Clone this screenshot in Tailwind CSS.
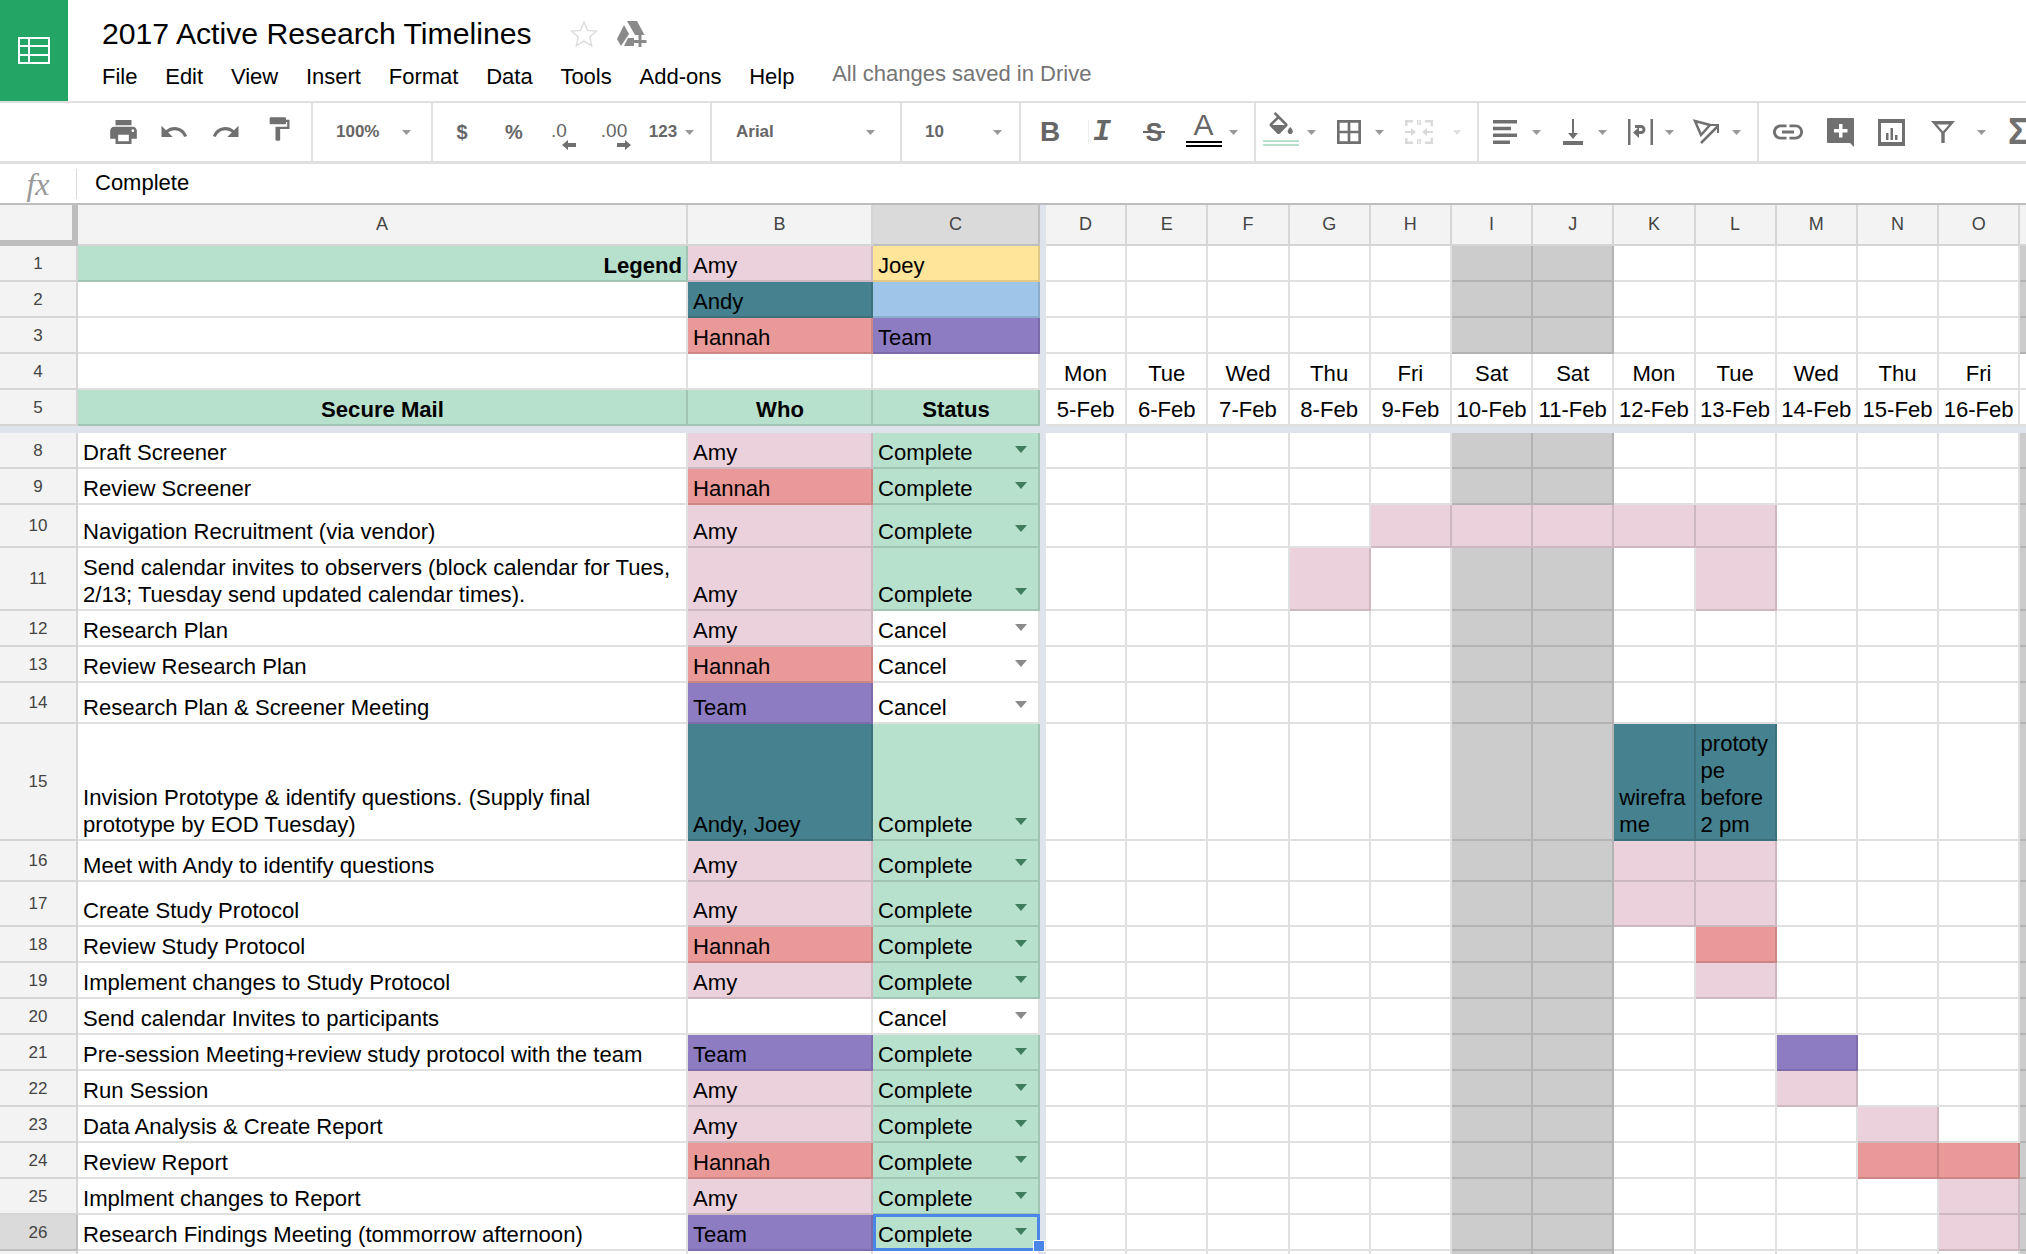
<!DOCTYPE html>
<html lang="en">
<head>
    <meta charset="UTF-8">
    <title>2017 Active Research Timelines - Google Sheets</title>
    <script src="https://cdn.jsdelivr.net/npm/@tailwindcss/browser@4"></script>
</head>
<body class="w-[2026px] h-[1254px] overflow-hidden bg-white text-black [font-family:'Liberation_Sans',Arial,sans-serif]">
    <!-- Title bar -->
    <header class="flex h-[103px] border-b-2 border-[#e0e0e0]">
        <div class="w-[68px] h-full bg-[#23a566] flex items-center justify-center">
            <svg class="w-[32px] h-[27px]" viewBox="0 0 32 27" fill="none" stroke="#ffffff" stroke-width="2"><rect x="1" y="1" width="30" height="25"/><path d="M1 9h30M1 18h30M11 1v25"/></svg>
        </div>
        <div class="pl-[34px] pt-[15px]">
            <div class="flex items-center h-[38px]">
                <h1 class="text-[30.2px] leading-[38px]">2017 Active Research Timelines</h1>
                <svg class="w-[30px] h-[30px] ml-[37px]" viewBox="0 0 24 24" fill="none" stroke="#dcdcdc" stroke-width="1.1"><path d="M12 2.5l2.8 6.6 7.2.6-5.4 4.7 1.6 7-6.2-3.7-6.2 3.7 1.6-7L2 9.7l7.2-.6z"/></svg>
                <svg class="w-[30px] h-[26px] ml-[18px]" viewBox="0 0 30 26" fill="#8a8a8a"><path d="M10 0h10l7.500 14H18z"/><path d="M7 4l5 9-8 12-4-7z"/><path d="M7 25l4-8h6v8z"/><path d="M21.500 14h3v5h5v3h-5v4h-3v-4h-5v-3h5z"/></svg>
            </div>
            <nav class="flex items-center gap-[27.75px] text-[22px] leading-[28px] mt-[10px]">
                <span>File</span><span>Edit</span><span>View</span><span>Insert</span><span>Format</span><span>Data</span><span>Tools</span><span>Add-ons</span><span>Help</span>
                <span class="text-[#757575] ml-[10px] -mt-[6px]">All changes saved in Drive</span>
            </nav>
        </div>
    </header>

    <!-- Toolbar -->
    <div class="flex h-[61px] overflow-hidden border-b-[3px] border-[#e0e0e0] text-[#666666]">
        <div class="w-[313px] shrink-0 pl-[98px] flex items-center border-r-2 border-[#e0e0e0]">
            <div class="w-[50px] flex justify-center"><svg class="w-[27px] h-[24px]" viewBox="2 3 20 18" fill="#707070"><path d="M19 8H5c-1.66 0-3 1.34-3 3v6h4v4h12v-4h4v-6c0-1.66-1.34-3-3-3zm-3 11H8v-5h8v5zm3-7c-.55 0-1-.45-1-1s.45-1 1-1 1 .45 1 1-.45 1-1 1zm-1-9H6v4h12V3z"/></svg></div>
            <div class="w-[52px] flex justify-center"><svg class="w-[30px] h-[30px]" viewBox="0 0 24 24" fill="#707070"><path d="M12.5 8c-2.65 0-5.05.99-6.9 2.6L2 7v9h9l-3.62-3.62c1.39-1.16 3.16-1.88 5.12-1.88 3.54 0 6.55 2.31 7.6 5.5l2.37-.78C21.08 11.03 17.15 8 12.5 8z"/></svg></div>
            <div class="w-[52px] flex justify-center"><svg class="w-[30px] h-[30px]" viewBox="0 0 24 24" fill="#707070"><path d="M18.4 10.6C16.55 8.99 14.15 8 11.5 8c-4.65 0-8.58 3.03-9.96 7.22L3.9 16c1.05-3.19 4.05-5.5 7.6-5.5 1.95 0 3.73.72 5.12 1.88L13 16h9V7l-3.6 3.6z"/></svg></div>
            <div class="w-[54px] flex justify-center"><svg class="w-[28px] h-[28px] -mt-[6px]" viewBox="0 0 24 24" fill="#707070"><path d="M18 4V3c0-.55-.45-1-1-1H5c-.55 0-1 .45-1 1v4c0 .55.45 1 1 1h12c.55 0 1-.45 1-1V6h1v4H9v11c0 .55.45 1 1 1h2c.55 0 1-.45 1-1v-9h8V4h-3z"/></svg></div>
        </div>
        <div class="w-[120px] shrink-0 pl-[23px] flex items-center border-r-2 border-[#e0e0e0] text-[17px] font-bold">
            <span>100%</span>
            <svg class="w-[9px] h-[5px] ml-[23px]" viewBox="0 0 9 5"><path d="M0 0h9L4.500 5z" fill="#999999"/></svg>
        </div>
        <div class="w-[279px] shrink-0 flex items-center border-r-2 border-[#e0e0e0] font-bold text-[20px]">
            <div class="w-[58px] text-center">$</div>
            <div class="w-[46px] text-center">%</div>
            <div class="w-[44px] mt-[6px] flex flex-col items-center leading-none text-[19px] font-normal">
                <span>.0</span>
                <svg class="w-[14px] h-[10px] ml-[20px]" viewBox="0 0 14 10" fill="#707070"><path d="M0 5l6-5v3h8v4H6v3z"/></svg>
            </div>
            <div class="w-[66px] mt-[6px] flex flex-col items-center leading-none text-[19px] font-normal">
                <span>.00</span>
                <svg class="w-[14px] h-[10px] ml-[20px]" viewBox="0 0 14 10" fill="#707070"><path d="M14 5L8 0v3H0v4h8v3z"/></svg>
            </div>
            <div class="w-[32px] text-center text-[17px]">123</div>
            <svg class="w-[9px] h-[5px] ml-[6px]" viewBox="0 0 9 5"><path d="M0 0h9L4.500 5z" fill="#999999"/></svg>
        </div>
        <div class="w-[190px] shrink-0 pl-[24px] pr-[25px] flex items-center justify-between border-r-2 border-[#e0e0e0] text-[17px] font-bold">
            <span>Arial</span>
            <svg class="w-[9px] h-[5px]" viewBox="0 0 9 5"><path d="M0 0h9L4.500 5z" fill="#999999"/></svg>
        </div>
        <div class="w-[119px] shrink-0 pl-[23px] pr-[17px] flex items-center justify-between border-r-2 border-[#e0e0e0] text-[17px] font-bold">
            <span>10</span>
            <svg class="w-[9px] h-[5px]" viewBox="0 0 9 5"><path d="M0 0h9L4.500 5z" fill="#999999"/></svg>
        </div>
        <div class="w-[235px] shrink-0 flex items-center border-r-2 border-[#e0e0e0]">
            <div class="w-[58px] text-center text-[28px] font-bold leading-none">B</div>
            <div class="w-[1px] h-[24px] ml-[9px] -mr-[1px] bg-[#eeeeee]"></div>
            <div class="w-[28px] text-center text-[30px] font-bold italic leading-none [font-family:'Liberation_Mono',monospace]">I</div>
            <div class="w-[58px] ml-[9px] flex justify-center">
                <span class="relative text-[25px] font-bold leading-none px-[3px]">S<span class="absolute left-0 right-0 top-[11px] h-[2px] bg-[#666666]"></span></span>
            </div>
            <div class="w-[41px] flex flex-col items-center">
                <span class="text-[30px] leading-[28px] -mt-[6px]">A</span>
                <div class="w-[36px] h-[6px] mt-[2px] border-y-2 border-black"></div>
            </div>
            <svg class="w-[9px] h-[5px] ml-[5px]" viewBox="0 0 9 5"><path d="M0 0h9L4.500 5z" fill="#999999"/></svg>
        </div>
        <div class="w-[223px] shrink-0 flex items-center border-r-2 border-[#e0e0e0]">
            <div class="w-[50px] flex flex-col items-center">
                <svg class="w-[25px] h-[22px] -mt-[6px]" viewBox="3 0 18.500 17" fill="#707070"><path fill-rule="evenodd" d="M16.560 8.940L7.620 0 6.210 1.410l2.380 2.380-5.150 5.150c-.59.59-.59 1.540 0 2.120l5.500 5.500c.29.29.68.44 1.060.44s.77-.15 1.060-.44l5.500-5.500c.59-.58.59-1.530 0-2.120zM5.210 10L10 5.210 14.790 10H5.210zM19 11.500s-2 2.170-2 3.500c0 1.100.9 2 2 2s2-.9 2-2c0-1.330-2-3.500-2-3.500z"/></svg>
                <div class="w-[36px] h-[6px] mt-[6px] border-y-2 border-[#b7e1cd]"></div>
            </div>
            <div class="w-[10px] flex justify-center"><svg class="w-[9px] h-[5px]" viewBox="0 0 9 5"><path d="M0 0h9L4.500 5z" fill="#999999"/></svg></div>
            <div class="w-[48px] ml-[9px] flex justify-center"><svg class="w-[24px] h-[24px]" viewBox="3 3 18 18" fill="#707070"><path d="M3 3v18h18V3H3zm8 16H5v-6h6v6zm0-8H5V5h6v6zm8 8h-6v-6h6v6zm0-8h-6V5h6v6z"/></svg></div>
            <div class="w-[12px] flex justify-center"><svg class="w-[9px] h-[5px]" viewBox="0 0 9 5"><path d="M0 0h9L4.500 5z" fill="#999999"/></svg></div>
            <div class="w-[68px] flex justify-center"><svg class="w-[28px] h-[24px]" viewBox="0 0 28 24" fill="#d9d9d9"><path d="M0 0h8v2.500H2.500V6H0zM20 0h8v6h-2.500V2.500H20zM0 18h2.500v3.500H8V24H0zM25.500 18H28v6h-8v-2.500h5.500zM12 0h1.500v5H12zM14.500 0H16v5h-1.500zM12 19h1.500v5H12zM14.500 19H16v5h-1.500zM0 11h6V8l5 4-5 4v-3H0zM28 11h-6V8l-5 4 5 4v-3h6z"/></svg></div>
            <div class="w-[8px] flex justify-center"><svg class="w-[9px] h-[5px]" viewBox="0 0 9 5"><path d="M0 0h9L4.500 5z" fill="#dddddd"/></svg></div>
        </div>
        <div class="w-[280px] shrink-0 flex items-center border-r-2 border-[#e0e0e0]">
            <div class="w-[52px] flex justify-center"><svg class="w-[24px] h-[24px]" viewBox="0 0 24 24" fill="#707070"><path d="M0 0h24v3.500H0zM0 6.700h18v3.500H0zM0 13.400h24v3.500H0zM0 20.500h17v3.500H0z"/></svg></div>
            <div class="w-[10px] flex justify-center"><svg class="w-[9px] h-[5px]" viewBox="0 0 9 5"><path d="M0 0h9L4.500 5z" fill="#999999"/></svg></div>
            <div class="w-[40px] ml-[12px] flex justify-center"><svg class="w-[22px] h-[26px]" viewBox="0 0 22 26" fill="#707070"><path d="M10 0h2v14h4l-5 6-5-6h4zM1 22h20v4H1z"/></svg></div>
            <div class="w-[10px] ml-[4px] flex justify-center"><svg class="w-[9px] h-[5px]" viewBox="0 0 9 5"><path d="M0 0h9L4.500 5z" fill="#999999"/></svg></div>
            <div class="w-[40px] ml-[13px] flex justify-center"><svg class="w-[25px] h-[26px]" viewBox="0 0 25 26" fill="#707070"><path d="M0 0h2.500v26H0zM22.500 0H25v26h-2.500z"/><path d="M7 6h6a4.500 4.500 0 010 9h-2v4l-6-5.500L11 8v4h2a1.500 1.500 0 000-3H7z"/></svg></div>
            <div class="w-[10px] ml-[4px] flex justify-center"><svg class="w-[9px] h-[5px]" viewBox="0 0 9 5"><path d="M0 0h9L4.500 5z" fill="#999999"/></svg></div>
            <div class="w-[40px] ml-[13px] flex justify-center"><svg class="w-[28px] h-[28px]" viewBox="0 0 28 28" fill="none" stroke="#707070" stroke-width="2.500"><path d="M2 3l15 4-9 10z"/><path d="M8 25L25 8"/><path d="M17 7h8v8" stroke-width="2"/></svg></div>
            <div class="w-[10px] ml-[4px] flex justify-center"><svg class="w-[9px] h-[5px]" viewBox="0 0 9 5"><path d="M0 0h9L4.500 5z" fill="#999999"/></svg></div>
        </div>
        <div class="shrink-0 flex items-center">
            <div class="w-[58px] flex justify-center"><svg class="w-[36px] h-[36px]" viewBox="0 0 24 24" fill="#707070"><path d="M3.900 12c0-1.710 1.390-3.100 3.100-3.100h4V7H7c-2.760 0-5 2.240-5 5s2.240 5 5 5h4v-1.900H7c-1.710 0-3.100-1.390-3.100-3.100zM8 13h8v-2H8v2zm9-6h-4v1.900h4c1.710 0 3.100 1.390 3.100 3.100s-1.390 3.100-3.100 3.100h-4V17h4c2.760 0 5-2.240 5-5s-2.240-5-5-5z"/></svg></div>
            <div class="w-[46px] flex justify-center"><svg class="w-[27px] h-[29px]" viewBox="0 0 27 29" fill="#707070"><path fill-rule="evenodd" d="M1 0h25a1 1 0 011 1v28l-4-4H1a1 1 0 01-1-1V1a1 1 0 011-1zm11 6v5H7v3.500h5v5h3.500v-5h5V11h-5V6z"/></svg></div>
            <div class="w-[57px] flex justify-center"><svg class="w-[27px] h-[27px]" viewBox="0 0 27 27" fill="#707070"><path fill-rule="evenodd" d="M0 0h27v27H0zm3 4v19h21V4z"/><path d="M8 14h2.500v7H8zM12.500 9H15v12h-2.500zM17 16h2.500v5H17z"/></svg></div>
            <div class="w-[46px] flex justify-center"><svg class="w-[24px] h-[22px]" viewBox="0 0 24 22" fill="#707070"><path fill-rule="evenodd" d="M0 0h24L13.700 12v10h-3.400V12zM6 3.500l6 7 6-7z"/></svg></div>
            <svg class="w-[9px] h-[5px] ml-[11px]" viewBox="0 0 9 5"><path d="M0 0h9L4.500 5z" fill="#999999"/></svg>
            <span class="ml-[22px] text-[36px] leading-none font-bold text-[#707070]">Σ</span>
        </div>
    </div>

    <!-- Formula bar -->
    <div class="flex items-center h-[41px] border-b-2 border-[#bdbdbd]">
        <div class="w-[77px] h-[30px] flex items-center justify-center border-r border-[#dddddd] text-[32px] italic text-[#999999] [font-family:'Liberation_Serif',serif]">fx</div>
        <div class="pl-[18px] -mt-[2px] text-[22px]">Complete</div>
    </div>

    <!-- Sheet -->
    <div id="sheet" class="text-[22.1px] leading-[27px]"></div>

    <script>
        const colTemplate = "grid grid-cols-[78px_610px_185px_167px_6px_repeat(13,81.2px)]";
        const lineCell = "border-r-2 border-b-2 border-black/12 overflow-hidden";
        const fills = {
            g: "bg-[#b7e1cd]", p: "bg-[#ead1dc]", t: "bg-[#45818e]", r: "bg-[#ea9999]",
            u: "bg-[#8e7cc3]", y: "bg-[#ffe599]", b: "bg-[#9fc5e8]", s: "bg-[#cccccc]"
        };
        const whoFill = { Amy: "p", Hannah: "r", Team: "u", "Andy, Joey": "t" };
        // P only shows as a sliver at the right edge, so it has no text
        const letters = "DEFGHIJKLMNOP".split("");
        const days = ["Mon", "Tue", "Wed", "Thu", "Fri", "Sat", "Sat", "Mon", "Tue", "Wed", "Thu", "Fri", ""];
        const dates = ["5-Feb", "6-Feb", "7-Feb", "8-Feb", "9-Feb", "10-Feb", "11-Feb", "12-Feb", "13-Feb", "14-Feb", "15-Feb", "16-Feb", ""];

        // row number, height class, task, who, status, coloured timeline cells
        const tasks = [
            [8, "h-[36px]", "Draft Screener", "Amy", "Complete", {}],
            [9, "h-[36px]", "Review Screener", "Hannah", "Complete", {}],
            [10, "h-[43px]", "Navigation Recruitment (via vendor)", "Amy", "Complete", { H: "p", I: "p", J: "p", K: "p", L: "p" }],
            [11, "h-[63px]", "Send calendar invites to observers (block calendar for Tues, 2/13; Tuesday send updated calendar times).", "Amy", "Complete", { G: "p", L: "p" }],
            [12, "h-[36px]", "Research Plan", "Amy", "Cancel", {}],
            [13, "h-[36px]", "Review Research Plan", "Hannah", "Cancel", {}],
            [14, "h-[41px]", "Research Plan & Screener Meeting", "Team", "Cancel", {}],
            [15, "h-[117px]", "Invision Prototype & identify questions. (Supply final prototype by EOD Tuesday)", "Andy, Joey", "Complete", { K: "t", L: "t" }],
            [16, "h-[41px]", "Meet with Andy to identify questions", "Amy", "Complete", { K: "p", L: "p" }],
            [17, "h-[45px]", "Create Study Protocol", "Amy", "Complete", { K: "p", L: "p" }],
            [18, "h-[36px]", "Review Study Protocol", "Hannah", "Complete", { L: "r" }],
            [19, "h-[36px]", "Implement changes to Study Protocol", "Amy", "Complete", { L: "p" }],
            [20, "h-[36px]", "Send calendar Invites to participants", "", "Cancel", {}],
            [21, "h-[36px]", "Pre-session Meeting+review study protocol with the team", "Team", "Complete", { M: "u" }],
            [22, "h-[36px]", "Run Session", "Amy", "Complete", { M: "p" }],
            [23, "h-[36px]", "Data Analysis & Create Report", "Amy", "Complete", { N: "p" }],
            [24, "h-[36px]", "Review Report", "Hannah", "Complete", { N: "r", O: "r" }],
            [25, "h-[36px]", "Implment changes to Report", "Amy", "Complete", { O: "p" }],
            [26, "h-[36px]", "Research Findings Meeting (tommorrow afternoon)", "Team", "Complete", { O: "p" }],
            ["", "h-[36px]", "", "", "", {}]
        ];
        const cellText = { K15: "wirefra me", L15: "prototype before 2 pm" };

        function cell(text, fill, align) {
            const bg = fill ? fills[fill] : "";
            return `<div class="${lineCell} ${bg} flex items-end ${align || "justify-start"} pl-[5px] pr-[4px] pb-[1px]"><span class="min-w-0 break-words">${text || ""}</span></div>`;
        }

        function dateCell(text) {
            return `<div class="${lineCell} flex items-end justify-center pb-[1px] whitespace-nowrap">${text}</div>`;
        }

        function rowLabel(n, active) {
            const bg = active ? "bg-[#dadada]" : "bg-[#f3f3f3]";
            return `<div class="${bg} border-r-2 border-b-2 border-black/12 flex items-center justify-center text-[17px] text-[#444444]">${n}</div>`;
        }

        const gap = `<div class="bg-[#dfe3ec]"></div>`;
        const center = "justify-center";
        let html = "";

        // Column letters
        html += `<div class="${colTemplate} h-[41px] text-[18px] text-[#444444]">`;
        html += `<div class="bg-[#f3f3f3] border-r-[6px] border-b-[6px] border-[#bdbdbd]"></div>`;
        ["A", "B", "C"].forEach(l => {
            const bg = l === "C" ? "bg-[#dadada]" : "bg-[#f3f3f3]";
            html += `<div class="${bg} border-r-2 border-b-2 border-black/12 flex items-center justify-center">${l}</div>`;
        });
        html += gap;
        letters.forEach(l => {
            html += `<div class="bg-[#f3f3f3] border-r-2 border-b-2 border-black/12 flex items-center justify-center">${l === "P" ? "" : l}</div>`;
        });
        html += `</div>`;

        // Frozen rows 1-5
        const frozen = [
            [1, cell("<b>Legend</b>", "g", "justify-end"), cell("Amy", "p"), cell("Joey", "y")],
            [2, cell(""), cell("Andy", "t"), cell("", "b")],
            [3, cell(""), cell("Hannah", "r"), cell("Team", "u")],
            [4, cell(""), cell(""), cell("")],
            [5, cell("<b>Secure Mail</b>", "g", center), cell("<b>Who</b>", "g", center), cell("<b>Status</b>", "g", center)]
        ];
        frozen.forEach(([n, a, b, c]) => {
            html += `<div class="${colTemplate} h-[36px]">${rowLabel(n)}${a}${b}${c}${gap}`;
            letters.forEach((l, i) => {
                if (n === 4) html += dateCell(days[i]);
                else if (n === 5) html += dateCell(dates[i]);
                else html += cell("", "IJP".includes(l) ? "s" : "");
            });
            html += `</div>`;
        });

        html += `<div class="h-[7px] bg-[#dfe3ec]"></div>`;

        // Task rows
        tasks.forEach(([n, height, task, who, status, marks]) => {
            html += `<div class="${colTemplate} ${height}">${rowLabel(n, n === 26)}`;
            html += cell(task);
            html += cell(who, whoFill[who]);

            const done = status === "Complete";
            const caret = done ? "#3f7d5c" : "#8a8a8a";
            const arrow = status ? `<svg class="w-[12px] h-[7px] mb-[13px]" viewBox="0 0 12 7"><path d="M0 0h12L6 7z" fill="${caret}"/></svg>` : "";
            const selected = n === 26
                ? `<div class="absolute -right-[2px] -bottom-[2px] left-0 -top-[1px] border-[3px] border-[#4a86e8]"></div><div class="absolute -right-[7px] -bottom-[3px] w-[12px] h-[12px] bg-[#4a86e8] border border-white"></div>`
                : "";
            html += `<div class="relative border-r-2 border-b-2 border-black/12 ${done ? fills.g : ""} flex items-end justify-between pl-[5px] pr-[11px] pb-[1px]"><span>${status}</span>${arrow}${selected}</div>`;
            html += gap;

            letters.forEach(l => {
                const key = l + n;
                const fill = marks[l] || ("IJP".includes(l) ? "s" : "");
                html += cell(cellText[key], fill);
            });
            html += `</div>`;
        });

        document.getElementById("sheet").innerHTML = html;
    </script>
</body>
</html>
